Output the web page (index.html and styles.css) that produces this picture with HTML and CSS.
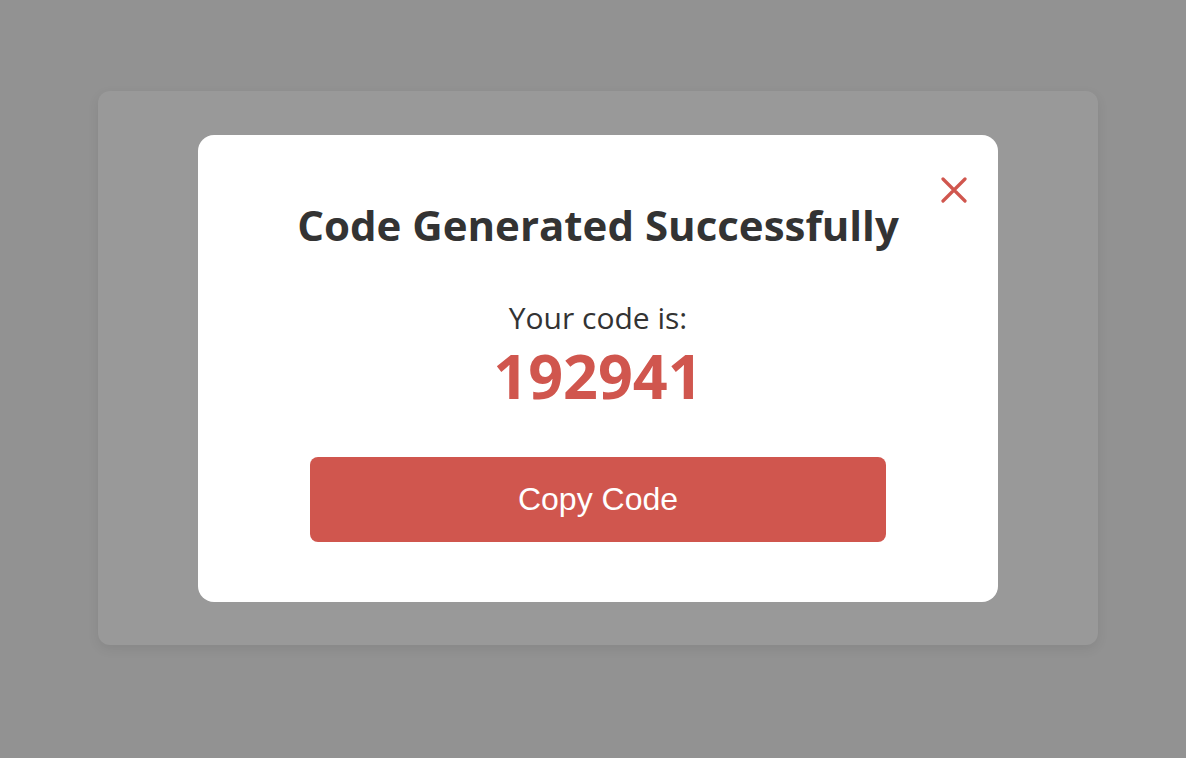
FILE: index.html
```html
<!DOCTYPE html>
<html lang="en">
<head>
<meta charset="utf-8">
<title>Code Generated</title>
<link rel="stylesheet" href="styles.css">
</head>
<body>
<div class="page">
  <div class="card">
    <div class="modal">
      <button class="close" aria-label="Close">
        <svg width="26" height="26" viewBox="0 0 26 26"><path d="M2 2 L24 24 M24 2 L2 24" stroke="#d0564e" stroke-width="3.2" stroke-linecap="round" fill="none"/></svg>
      </button>
      <h1 class="title">Code Generated Successfully</h1>
      <p class="label">Your code is:</p>
      <p class="code">192941</p>
      <button class="copy">Copy Code</button>
    </div>
  </div>
</div>
</body>
</html>
```

FILE: styles.css
```css
html, body {
  margin: 0;
  height: 100%;
  background: #929292;
}
.page {
  padding: 91px 0 0 98px;
}
.card {
  width: 1000px;
  box-sizing: border-box;
  background: #999999;
  border-radius: 12px;
  padding: 44px 100px 43px;
  box-shadow: 0 4px 12px rgba(0, 0, 0, 0.08);
}
.modal {
  position: relative;
  background: #ffffff;
  border-radius: 16px;
  height: 467px;
  box-sizing: border-box;
  padding: 62px 112px 60px;
  display: flex;
  flex-direction: column;
  align-items: center;
  font-family: "Open Sans", Lato, sans-serif;
  color: #333333;
}
.close {
  position: absolute;
  top: 42px;
  right: 31px;
  width: 26px;
  height: 26px;
  padding: 0;
  border: 0;
  background: none;
  display: flex;
}
.title {
  margin: 0;
  font-size: 42px;
  font-weight: 700;
  line-height: 56px;
  white-space: nowrap;
}
.label {
  margin: 45px 0 0;
  font-size: 30px;
  line-height: 40px;
}
.code {
  margin: 6px 0 0;
  font-size: 61px;
  font-weight: 700;
  line-height: 64px;
  color: #d0564e;
}
.copy {
  margin-top: 49px;
  width: 100%;
  height: 85px;
  border: 0;
  border-radius: 8px;
  background: #d0564e;
  color: #ffffff;
  font-family: "Liberation Sans", Arial, sans-serif;
  font-size: 32px;
}
```
